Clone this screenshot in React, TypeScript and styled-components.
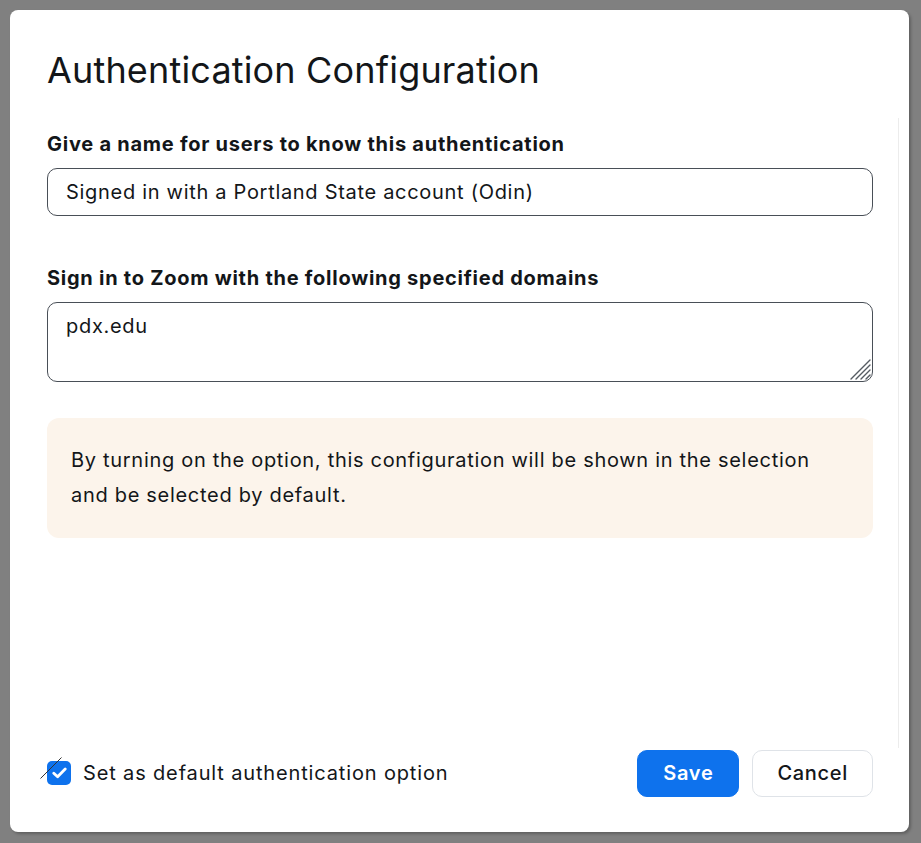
import styled, { createGlobalStyle } from "styled-components";

const GlobalStyle = createGlobalStyle`
  * {
    box-sizing: border-box;
  }
  html,
  body {
    margin: 0;
    padding: 0;
    background: #808080;
  }
  body {
    font-family: Inter, "Liberation Sans", sans-serif;
    color: #131619;
  }
`;

const App = () => {
  return (
    <>
      <GlobalStyle />
      <Page>
        <Modal>
          <Header>
            <Title>Authentication Configuration</Title>
          </Header>
          <Body>
            <Field>
              <FieldLabel>Give a name for users to know this authentication</FieldLabel>
              <TextInput defaultValue="Signed in with a Portland State account (Odin)" />
            </Field>
            <Field>
              <FieldLabel>Sign in to Zoom with the following specified domains</FieldLabel>
              <AreaWrap>
                <DomainArea defaultValue="pdx.edu" />
                {/* resize grip in the bottom-right corner */}
                <Grip width="22" height="22" viewBox="0 0 22 22">
                  <g stroke="#555b62" strokeWidth="1.4" strokeLinecap="round">
                    <line x1="2" y1="21" x2="21" y2="2" />
                    <line x1="7" y1="21" x2="21" y2="7" />
                    <line x1="12" y1="21" x2="21" y2="12" />
                    <line x1="17" y1="21" x2="21" y2="17" />
                  </g>
                </Grip>
              </AreaWrap>
            </Field>
            <Notice>
              By turning on the option, this configuration will be shown in the selection
              and be selected by default.
            </Notice>
          </Body>
          <Footer>
            <CheckRow>
              <CheckBox>
                <svg width="15" height="12" viewBox="0 0 15 12" fill="none">
                  <path
                    d="M1.8 6.2L5.6 9.8L13.2 2"
                    stroke="#fff"
                    strokeWidth="2.8"
                    strokeLinecap="round"
                    strokeLinejoin="round"
                  />
                </svg>
                <Slash width="22" height="22" viewBox="0 0 22 22">
                  <line x1="0.5" y1="21.5" x2="21.5" y2="0.5" stroke="#333" strokeWidth="1" />
                </Slash>
              </CheckBox>
              <CheckText>Set as default authentication option</CheckText>
            </CheckRow>
            <Actions>
              <Button $primary>Save</Button>
              <Button>Cancel</Button>
            </Actions>
          </Footer>
        </Modal>
      </Page>
    </>
  );
};

export default App;

const Page = styled.div`
  height: 843px;
  padding: 10px 0 0 10px;
`;

const Modal = styled.div`
  width: 899px;
  height: 822px;
  background: #fff;
  border-radius: 8px;
  box-shadow: 2px 2px 3px rgba(0, 0, 0, 0.25);
  display: flex;
  flex-direction: column;
`;

const Header = styled.div`
  padding: 40px 36px 28px 37px;
`;

const Title = styled.h1`
  margin: 0;
  font-size: 36px;
  font-weight: 400;
  line-height: 40px;
  letter-spacing: 0.17px;
  color: #131619;
`;

const Body = styled.div`
  flex: 1;
  margin-right: 10px;
  border-right: 1px solid #ececec;
  padding: 14px 25px 0 37px;
  display: flex;
  flex-direction: column;
  overflow: hidden;
`;

const Field = styled.div`
  display: flex;
  flex-direction: column;
  gap: 12px;
  & + & {
    margin-top: 50px;
  }
`;

const FieldLabel = styled.label`
  font-size: 20px;
  font-weight: 700;
  line-height: 24px;
  letter-spacing: 0.74px;
  color: #131619;
`;

const TextInput = styled.input`
  height: 48px;
  width: 100%;
  border: 1px solid #494f57;
  border-radius: 10px;
  padding: 0 18px;
  font-family: inherit;
  font-size: 20px;
  letter-spacing: 0.7px;
  color: #131619;
  outline: none;
`;

const AreaWrap = styled.div`
  position: relative;
  height: 80px;
`;

const DomainArea = styled.textarea`
  display: block;
  height: 80px;
  width: 100%;
  border: 1px solid #494f57;
  border-radius: 10px;
  padding: 11px 18px;
  font-family: inherit;
  font-size: 20px;
  letter-spacing: 0.7px;
  line-height: 24px;
  color: #131619;
  outline: none;
  resize: none;
`;

const Grip = styled.svg`
  position: absolute;
  right: 2px;
  bottom: 2px;
  pointer-events: none;
`;

const Notice = styled.div`
  margin-top: 36px;
  background: #fcf4eb;
  border-radius: 12px;
  padding: 25px 56px 25px 24px;
  font-size: 20px;
  letter-spacing: 0.7px;
  line-height: 35px;
  color: #131619;
`;

const Footer = styled.div`
  height: 84px;
  padding: 1px 36px 35px 37px;
  display: flex;
  align-items: center;
  justify-content: space-between;
`;

const CheckRow = styled.label`
  display: flex;
  align-items: center;
  gap: 12px;
`;

const CheckBox = styled.span`
  position: relative;
  width: 24px;
  height: 24px;
  border-radius: 5px;
  background: #0e72ed;
  display: flex;
  align-items: center;
  justify-content: center;
`;

const Slash = styled.svg`
  position: absolute;
  left: -7px;
  top: -4px;
`;

const CheckText = styled.span`
  font-size: 20px;
  letter-spacing: 0.85px;
  color: #131619;
`;

const Actions = styled.div`
  display: flex;
  gap: 13px;
`;

const Button = styled.button<{ $primary?: boolean }>`
  height: 47px;
  padding: 0 ${(p) => (p.$primary ? 25 : 24)}px;
  border-radius: 10px;
  font-family: inherit;
  font-size: 20px;
  letter-spacing: 0.7px;
  font-weight: ${(p) => (p.$primary ? 600 : 500)};
  background: ${(p) => (p.$primary ? "#0e72ed" : "#fff")};
  color: ${(p) => (p.$primary ? "#fff" : "#131619")};
  border: 1px solid ${(p) => (p.$primary ? "#0e72ed" : "#dfe3e8")};
  cursor: pointer;
`;
